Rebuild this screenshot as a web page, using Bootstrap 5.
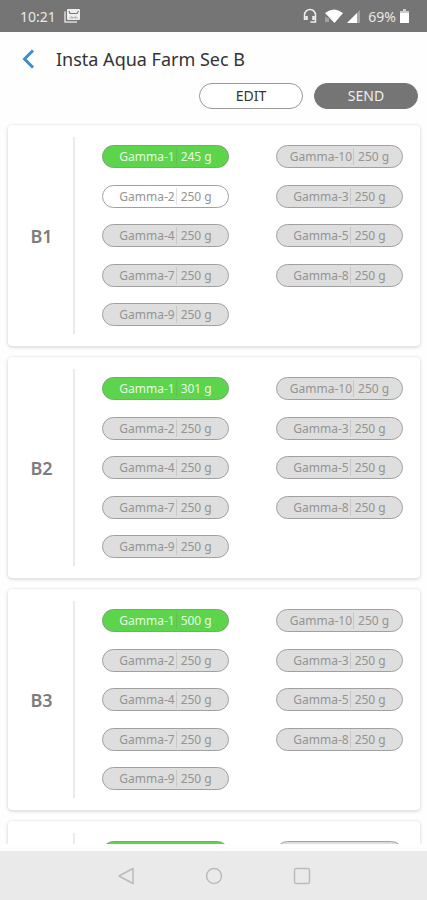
<!DOCTYPE html>
<html lang="en">
<head>
<meta charset="utf-8">
<meta name="viewport" content="width=device-width, initial-scale=1">
<title>Insta Aqua Farm Sec B</title>
<link href="https://cdn.jsdelivr.net/npm/bootstrap@5.3.0/dist/css/bootstrap.min.css" rel="stylesheet">
<style>
body { font-family: "Noto Sans", sans-serif; background: #fefefe; color: #333; }
.status-bar { background: #757575; color: #e8e8e8; height: 32px; padding: 0 18px 0 20px; font-size: 14px; }
.title-bar { height: 51px; padding: 2px 22px 0; }
.title-bar h1 { font-size: 18px; line-height: 24px; margin-left: 20px; }
.actions { padding: 0 9px 0 16px; gap: 11px; }
.btn-action { width: 104px; height: 26px; font-size: 14px; line-height: 24px; padding: 0; border: 1px solid #999; }
.btn-edit, .btn-edit:hover { background: #fff; color: #333; }
.btn-send, .btn-send:hover { background: #757575; border-color: #757575; color: #eee; }
.sections { padding: 16px 7px 0 8px; margin-bottom: 7px; min-height: 0; overflow-y: auto; scrollbar-width: none; }
.sections::-webkit-scrollbar { display: none; }
.section-card { border: 0; border-radius: 4px; height: 221px; margin-bottom: 11px; flex-shrink: 0; box-shadow: 0 1px 3px 1px rgba(0,0,0,.12); }
.section-name { width: 65px; padding-left: 2px; font-size: 18px; line-height: 24px; font-weight: 600; color: #7c7c7c; }
.rule { width: 2px; margin: 12px 0; background: #ebebeb; }
.pill-grid { display: grid; grid-template-columns: 1fr 1fr; column-gap: 47px; align-content: space-between; padding: 20px 17px 20px 27px; }
.pill { height: 23px; padding: 0; font-size: 12px; line-height: 17px; border: 1px solid #a0a0a0; border-radius: 12px; background: #dedede; color: #949494; }
.pill:hover { background: #dedede; color: #949494; border-color: #a0a0a0; }
.pill-open, .pill-open:hover { background: #fff; }
.pill-on, .pill-on:hover { background: #5cd44b; border-color: #7ba775; color: #e9fbe5; }
.pill .weight { border-left: 1px solid rgba(120,120,120,.22); margin-left: 1px; padding-left: 4px; }
.nav-keys { background: #eaeaea; height: 49px; gap: 70px; }
.nav-keys .btn { width: 18px; height: 18px; line-height: 0; }
</style>
<script src="https://cdn.jsdelivr.net/npm/bootstrap@5.3.0/dist/js/bootstrap.bundle.min.js"></script>
</head>
<body>
<div class="d-flex flex-column vh-100 overflow-hidden">
  <div class="status-bar d-flex align-items-center flex-shrink-0">
    <span>10:21</span>
    <svg class="ms-2" width="18" height="16" viewBox="1 0 18 16" fill="none" aria-hidden="true"><path d="M2 3.500v10.500h12" stroke="#ddd" stroke-width="1.500"/><rect x="4" y="1" width="13" height="11" rx="1" fill="#eee"/><path d="M6 3l1 2.500h7L15.500 3" stroke="#757575" stroke-width="1.200"/><path d="M6 10.500l2.500-2.500 2 1.500 2-1.500 3 2.500z" fill="#bbb"/></svg>
    <svg class="ms-auto" width="14" height="16" viewBox="0 0 14 16" fill="none" stroke="#eee" aria-hidden="true"><path d="M1.500 12V7a5.500 5.500 0 0 1 11 0v7H7.500" stroke-width="1.500"/><path d="M3.500 8v4M10.500 8v4" stroke-width="2.500"/></svg>
    <svg class="ms-2" width="18" height="14" viewBox="0 0 18 14" aria-hidden="true"><path d="M0 4Q9-3 18 4L9.500 14z" fill="#fff"/><path d="M1 8v5M3 9v4" stroke="#ccc"/></svg>
    <svg class="ms-1" width="13" height="13" viewBox="0 0 13 13" aria-hidden="true"><path d="M13 0v13H0z" fill="#a5a5a5"/><path d="M10 3v10H0z" fill="#fff"/></svg>
    <span class="ms-2">69%</span>
    <svg class="ms-1" width="9" height="14" viewBox="0 0 9 14" aria-hidden="true"><path d="M3 0h3v2h3v2H0V2h3z" fill="#ccc"/><path d="M0 4h9v10H0z" fill="#fff"/></svg>
  </div>
  <header class="title-bar d-flex align-items-center flex-shrink-0">
    <button class="btn p-0 border-0 lh-1 d-flex" type="button" aria-label="Back"><svg width="14" height="20" viewBox="0 0 14 20" fill="none"><path d="M11 1.500L2.500 10l8.500 8.500" stroke="#3f8cca" stroke-width="3"/></svg></button>
    <h1 class="mb-0 fw-normal">Insta Aqua Farm Sec B</h1>
  </header>
  <div class="actions d-flex justify-content-end flex-shrink-0">
    <button class="btn rounded-pill btn-action btn-edit" type="button">EDIT</button>
    <button class="btn rounded-pill btn-action btn-send" type="button">SEND</button>
  </div>
  <main class="sections d-flex flex-column flex-grow-1" id="sections"></main>
  <nav class="nav-keys d-flex justify-content-center align-items-center flex-shrink-0" aria-label="System">
    <button class="btn p-0 border-0" type="button" aria-label="Back"><svg width="18" height="18" viewBox="0 0 18 18" fill="none" stroke="#bcbcbc" stroke-width="1.500"><path d="M16 1.500v15L2 9z" stroke-linejoin="round"/></svg></button>
    <button class="btn p-0 border-0" type="button" aria-label="Home"><svg width="18" height="18" viewBox="0 0 18 18" fill="none" stroke="#bcbcbc" stroke-width="1.500"><circle cx="9" cy="9" r="7.500"/></svg></button>
    <button class="btn p-0 border-0" type="button" aria-label="Recent apps"><svg width="18" height="18" viewBox="0 0 18 18" fill="none" stroke="#bcbcbc" stroke-width="1.500"><rect x="1.500" y="1.500" width="15" height="15" rx="2"/></svg></button>
  </nav>
</div>
<script>
const names = [1, 10, 2, 3, 4, 5, 7, 8, 9];
const sections = [
  { name: "B1", first: 245, open: 2 },
  { name: "B2", first: 301 },
  { name: "B3", first: 500 },
  { name: "B4", first: 250 }
];
document.getElementById("sections").innerHTML = sections.map(s => `
  <section class="card section-card flex-row">
    <h2 class="section-name mb-0 flex-shrink-0 d-flex align-items-center justify-content-center">${s.name}</h2>
    <div class="rule flex-shrink-0"></div>
    <div class="pill-grid flex-grow-1">
      ${names.map(n => `<button type="button" class="btn pill d-flex align-items-center justify-content-center ${n === 1 ? "pill-on" : n === s.open ? "pill-open" : ""}"><span>Gamma-${n}</span><span class="weight">${n === 1 ? s.first : 250} g</span></button>`).join("")}
    </div>
  </section>`).join("");
</script>
</body>
</html>
